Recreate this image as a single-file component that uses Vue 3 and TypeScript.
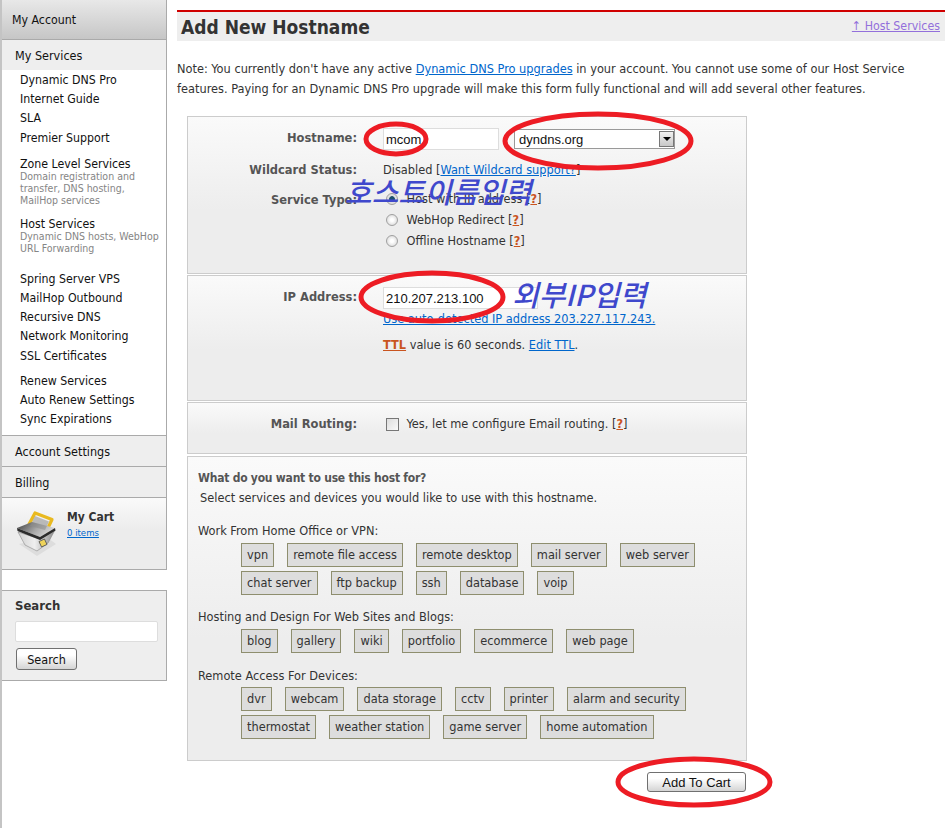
<script setup lang="ts">
const group1: string[] = ['Dynamic DNS Pro', 'Internet Guide', 'SLA', 'Premier Support']
const group2: string[] = ['Spring Server VPS', 'MailHop Outbound', 'Recursive DNS', 'Network Monitoring', 'SSL Certificates']
const group3: string[] = ['Renew Services', 'Auto Renew Settings', 'Sync Expirations']
const tagGroups: { title: string; rows: string[][] }[] = [
  {
    title: 'Work From Home Office or VPN:',
    rows: [
      ['vpn', 'remote file access', 'remote desktop', 'mail server', 'web server'],
      ['chat server', 'ftp backup', 'ssh', 'database', 'voip']
    ]
  },
  {
    title: 'Hosting and Design For Web Sites and Blogs:',
    rows: [['blog', 'gallery', 'wiki', 'portfolio', 'ecommerce', 'web page']]
  },
  {
    title: 'Remote Access For Devices:',
    rows: [
      ['dvr', 'webcam', 'data storage', 'cctv', 'printer', 'alarm and security'],
      ['thermostat', 'weather station', 'game server', 'home automation']
    ]
  }
]
</script>

<template>
  <div class="page">
    <aside class="side">
      <div class="nav">
        <div class="account">My Account</div>
        <div class="services">My Services</div>
        <ul class="links first">
          <li v-for="l in group1" :key="l">{{ l }}</li>
        </ul>
        <div class="block zone">
          <div class="blockname">Zone Level Services</div>
          <div class="sub">Domain registration and<br />transfer, DNS hosting,<br />MailHop services</div>
        </div>
        <div class="block host">
          <div class="blockname">Host Services</div>
          <div class="sub">Dynamic DNS hosts, WebHop<br />URL Forwarding</div>
        </div>
        <ul class="links second">
          <li v-for="l in group2" :key="l">{{ l }}</li>
        </ul>
        <ul class="links third">
          <li v-for="l in group3" :key="l">{{ l }}</li>
        </ul>
        <div class="navbar settings">Account Settings</div>
        <div class="navbar">Billing</div>
        <div class="cart">
          <svg class="carticon" viewBox="0 0 44 48" width="44" height="48">
            <defs>
              <linearGradient id="lidg" x1="0" y1="0" x2="1" y2="0.4">
                <stop offset="0" stop-color="#3c3c3c" />
                <stop offset="0.6" stop-color="#a8a8a8" />
                <stop offset="1" stop-color="#d8d8d8" />
              </linearGradient>
              <linearGradient id="bodyg" x1="0" y1="0" x2="1" y2="0">
                <stop offset="0" stop-color="#d0d0d0" />
                <stop offset="0.45" stop-color="#efefef" />
                <stop offset="1" stop-color="#8c8c8c" />
              </linearGradient>
            </defs>
            <path d="M3 34 L21 46 L40 34 L32 28 Z" fill="#d8d8d8" opacity=".75" />
            <path d="M2 22 L24 29 L39 20 L32 33 L21 41 L9 35 Z" fill="url(#bodyg)" stroke="#8a8a8a" stroke-width=".6" />
            <path d="M11 18 L19 3 L36 9.5 L30 22" fill="none" stroke="#e9b91f" stroke-width="3.2" stroke-linejoin="round" />
            <path d="M1 18 L16 12 L39 18 L24 27 Z" fill="url(#lidg)" />
            <path d="M1 18 L24 27 L39 18 L39.5 20.5 L24 30 L1.5 21 Z" fill="#2c2c2c" />
            <path d="M14 16 L19 6 L33 11.5 L29 20" fill="#8c8c8c" opacity=".55" />
            <rect x="24" y="30" width="6" height="6" fill="#eed35a" stroke="#555" stroke-width=".8" transform="rotate(-25 27 33)" />
          </svg>
          <div class="cartinfo">
            <div class="carttitle">My Cart</div>
            <a class="cartlink">0 items</a>
          </div>
        </div>
      </div>
      <div class="searchbox">
        <div class="searchtitle">Search</div>
        <input class="searchinput" type="text" aria-label="Search" />
        <button class="btn searchbtn" type="button">Search</button>
      </div>
    </aside>

    <main class="main">
      <header class="titlebar">
        <h1>Add New Hostname</h1>
        <a class="uplink">↑ Host Services</a>
      </header>
      <p class="note">
        Note: You currently don't have any active <a class="lnk">Dynamic DNS Pro upgrades</a> in your account. You cannot use some of our Host Service features. Paying for an Dynamic DNS Pro upgrade will make this form fully functional and will add several other features.
      </p>

      <section class="panel p1">
        <div class="row hostrow">
          <label class="lbl">Hostname:</label>
          <div class="fields">
            <input class="textin hostin" type="text" value="mcom" />
            <div class="selectwrap">
              <select class="sel"><option>dyndns.org</option></select>
              <span class="arrow"></span>
            </div>
          </div>
        </div>
        <div class="row wildrow">
          <label class="lbl">Wildcard Status:</label>
          <div class="val">Disabled [<a class="lnk">Want Wildcard support?</a>]</div>
        </div>
        <div class="row typerow">
          <label class="lbl">Service Type:</label>
          <div class="radios">
            <div class="radio"><input class="rad" type="radio" name="t" checked /> Host with IP address [<a class="q">?</a>]</div>
            <div class="radio"><input class="rad" type="radio" name="t" /> WebHop Redirect [<a class="q">?</a>]</div>
            <div class="radio"><input class="rad" type="radio" name="t" /> Offline Hostname [<a class="q">?</a>]</div>
          </div>
        </div>
      </section>

      <section class="panel p2">
        <div class="row iprow">
          <label class="lbl">IP Address:</label>
          <div class="ipcol">
            <input class="textin ipin" type="text" value="210.207.213.100" />
            <a class="lnk autolnk">Use auto-detected IP address 203.227.117.243.</a>
            <div class="ttl"><a class="ttlname">TTL</a> value is 60 seconds. <a class="lnk">Edit TTL</a>.</div>
          </div>
        </div>
      </section>

      <section class="panel p3">
        <div class="row">
          <label class="lbl">Mail Routing:</label>
          <div class="val mail"><input class="chk" type="checkbox" /> Yes, let me configure Email routing. [<a class="q">?</a>]</div>
        </div>
      </section>

      <section class="panel p4">
        <h2>What do you want to use this host for?</h2>
        <p class="lead">Select services and devices you would like to use with this hostname.</p>
        <div v-for="g in tagGroups" :key="g.title" class="taggroup">
          <div class="tagtitle">{{ g.title }}</div>
          <div v-for="(r, i) in g.rows" :key="i" class="tagrow">
            <span v-for="t in r" :key="t" class="tag">{{ t }}</span>
          </div>
        </div>
      </section>

      <div class="actions">
        <button class="btn addbtn" type="button">Add To Cart</button>
      </div>
    </main>

    <svg class="marks" width="945" height="828" viewBox="0 0 945 828">
      <g fill="none" stroke="#ed1c24" stroke-width="5">
        <ellipse cx="396" cy="139" rx="30" ry="15" />
        <ellipse cx="598" cy="141" rx="93" ry="27" />
        <ellipse cx="432" cy="297" rx="71" ry="24" />
        <ellipse cx="694" cy="782" rx="76" ry="23" />
      </g>
    </svg>
    <div class="hand hand1">호스트이름입력</div>
    <div class="hand hand2">외부IP입력</div>
  </div>
</template>

<style>
html, body { margin: 0; background: #fff; }
</style>

<style scoped>
.page {
  position: relative;
  display: flex;
  width: 945px;
  height: 828px;
  overflow: hidden;
  background: #fff;
  color: #333;
  font: 12.65px/20px "DejaVu Sans Condensed", "DejaVu Sans", sans-serif;
}
.side {
  width: 167px;
  flex: none;
  box-sizing: border-box;
  border-left: 2px solid #c4c4c4;
}
.nav {
  border-right: 1px solid #aaa;
  border-bottom: 1px solid #aaa;
  box-sizing: border-box;
  height: 570px;
  color: #111;
  font-size: 12.25px;
}
.account {
  box-sizing: border-box;
  padding: 10px 0 0 10px;
  background: linear-gradient(#e8e8e8, #c6c6c6);
  border-bottom: 1px solid #aaa;
  height: 40px;
}
.services {
  height: 30px;
  padding: 6px 0 0 13px;
  box-sizing: border-box;
  background: #eee;
  font-size: 12.5px;
}
.links { list-style: none; margin: 0; padding: 0 0 0 18px; }
.links li { height: 19.2px; line-height: 19px; }
.first { padding-top: 1px; }
.block { padding-left: 18px; }
.zone { margin-top: 10px; }
.host { margin-top: 12px; }
.blockname { line-height: 12px; }
.sub { font-size: 10.5px; line-height: 12px; color: #858585; }
.second { margin-top: 16px; }
.third { margin-top: 6px; }
.navbar {
  height: 31px;
  box-sizing: border-box;
  padding: 6px 0 0 13px;
  background: #eee;
  border-top: 1px solid #aaa;
  font-size: 12.5px;
}
.settings { margin-top: 6px; }
.cart {
  height: 72px;
  box-sizing: border-box;
  display: flex;
  border-top: 1px solid #aaa;
  background: linear-gradient(#fafafa, #ececec 45%);
  padding: 12px 0 0 14px;
}
.carticon { display: block; }
.cartinfo { margin-left: 7px; }
.carttitle { font-weight: bold; color: #333; line-height: 14px; font-size: 12px; }
.cartlink { display: block; font-size: 9.5px; color: #0066cc; text-decoration: underline; line-height: 18px; }
.searchbox {
  margin-top: 20px;
  height: 91px;
  box-sizing: border-box;
  border: 1px solid #aaa;
  border-left: 0;
  background: #eee;
  padding: 5px 0 0 13px;
}
.searchtitle { font-weight: bold; font-size: 13px; line-height: 20px; color: #333; }
.searchinput {
  display: block;
  width: 143px;
  height: 21px;
  box-sizing: border-box;
  margin: 5px 0 6px;
  background: #fff;
  border: 1px solid #ddd;
  border-radius: 2px;
  padding: 0;
}
.btn {
  display: block;
  box-sizing: border-box;
  background: linear-gradient(#fff 30%, #d4d4d4);
  border: 1px solid #707070;
  border-radius: 3px;
  color: #111;
  padding: 0;
  font: 13px "Liberation Sans", sans-serif;
}
.searchbtn {
  margin-left: 1px;
  width: 61px;
  height: 22px;
  padding-top: 1px;
  font: 12.5px "DejaVu Sans Condensed", "DejaVu Sans", sans-serif;
}

.main { width: 768px; margin-left: 10px; flex: none; }
.titlebar {
  margin-top: 10px;
  height: 31px;
  box-sizing: border-box;
  border-top: 2px solid #d00000;
  background: #eee;
  display: flex;
  justify-content: space-between;
  padding: 0 5px 0 4px;
}
h1 { margin: 0; font-size: 19px; line-height: 30px; font-weight: bold; color: #333; }
.uplink { color: #9370db; text-decoration: underline; line-height: 28px; font-size: 12.3px; }
.note { margin: 18px 0 18px; line-height: 19.5px; width: 740px; }
.lnk { color: #0066cc; text-decoration: underline; }
.q { color: #c9541f; font-weight: bold; text-decoration: underline; }
.panel {
  margin-left: 10px;
  width: 560px;
  box-sizing: border-box;
  border: 1px solid #ccc;
  background: linear-gradient(#fafafa, #ededed 60%);
}
.p1 { height: 158px; padding-top: 11px; margin-bottom: 1px; }
.p2 { height: 126px; padding-top: 11px; margin-bottom: 1px; }
.p3 { height: 52px; padding-top: 11px; margin-bottom: 2px; }
.p4 { height: 305px; padding: 12px 0 0 10px; }
.row { display: flex; }
.lbl { width: 169px; text-align: right; font-weight: bold; color: #555; margin-right: 26px; flex: none; font-size: 12.75px; }
.fields { display: flex; gap: 15px; align-items: center; }
.textin {
  box-sizing: border-box;
  height: 22px;
  width: 116px;
  background: #fff;
  border: 1px solid #ddd;
  padding: 0 0 0 2px;
  font: 13px "Liberation Sans", sans-serif;
  color: #111;
}
.selectwrap { position: relative; width: 161px; height: 20px; }
.sel {
  width: 100%;
  height: 100%;
  appearance: none;
  background: #fff;
  border: 1px solid #999;
  border-radius: 0;
  padding: 0 0 0 4px;
  font: 13px "Liberation Sans", sans-serif;
  color: #111;
}
.arrow {
  position: absolute;
  right: 1px;
  top: 2px;
  width: 15px;
  height: 16px;
  box-sizing: border-box;
  background: linear-gradient(#f0f0f0, #c8c8c8);
  border: 1px solid #777;
}
.arrow::after {
  content: "";
  position: absolute;
  left: 3px;
  top: 5px;
  border: 4px solid transparent;
  border-top: 4px solid #000;
  border-bottom: 0;
}
.wildrow { margin-top: 10px; }
.typerow { margin-top: 10px; }
.radios { display: flex; flex-direction: column; margin: -1px 0 0 -3px; gap: 0.5px; }
.radio { height: 20.6px; display: flex; align-items: center; white-space: pre; }
.rad {
  appearance: none;
  width: 12px;
  height: 12px;
  margin: 0 5px 0 6px;
  border-radius: 50%;
  border: 1px solid #a0a0a0;
  background: radial-gradient(#fff 20%, #d0d0d0);
  flex: none;
}
.rad:checked { background: radial-gradient(#1c4f6b 35%, #e0e0e0 45%); }
.ipcol { display: flex; flex-direction: column; align-items: flex-start; }
.ipin { width: 155px; height: 22px; padding-left: 2px; }
.autolnk { line-height: 20px; }
.ttl { margin-top: 6px; line-height: 20px; }
.ttlname { color: #c9541f; font-weight: bold; text-decoration: underline; }
.mail { display: flex; align-items: center; white-space: pre; margin-left: 3px; }
.chk {
  appearance: none;
  width: 13px;
  height: 13px;
  margin: 0 4px 0 0;
  border: 1px solid #777;
  background: linear-gradient(135deg, #ddd, #fafafa);
  flex: none;
}
h2 { margin: 0; font-size: 12px; letter-spacing: -0.23px; line-height: 18px; color: #555; }
.lead { margin: 2px 0 14.5px 2px; line-height: 18px; }
.taggroup { margin-bottom: 14px; }
.taggroup:nth-of-type(1) { margin-bottom: 13px; }
.taggroup:nth-of-type(1) .tagtitle { padding-bottom: 1px; }
.tagtitle { line-height: 18px; }
.tagrow { display: flex; gap: 13px; margin: 2.5px 0 4px 43px; }
.tag {
  box-sizing: border-box;
  height: 24px;
  line-height: 22px;
  padding: 0 5px;
  background: #ddd;
  border: 1px solid #8e8e6e;
  color: #333;
  font-size: 12.65px;
}
.actions { display: flex; margin: 11px 0 0 470px; }
.addbtn { width: 99px; height: 20px; }
.marks { position: absolute; left: 0; top: 0; pointer-events: none; }
.hand {
  position: absolute;
  color: #3f48cc;
  font: italic 500 29px/34px "Noto Sans CJK KR", sans-serif;
  white-space: nowrap;
}
.hand1 { left: 345px; top: 173px; }
.hand2 { left: 512px; top: 276px; }
</style>
